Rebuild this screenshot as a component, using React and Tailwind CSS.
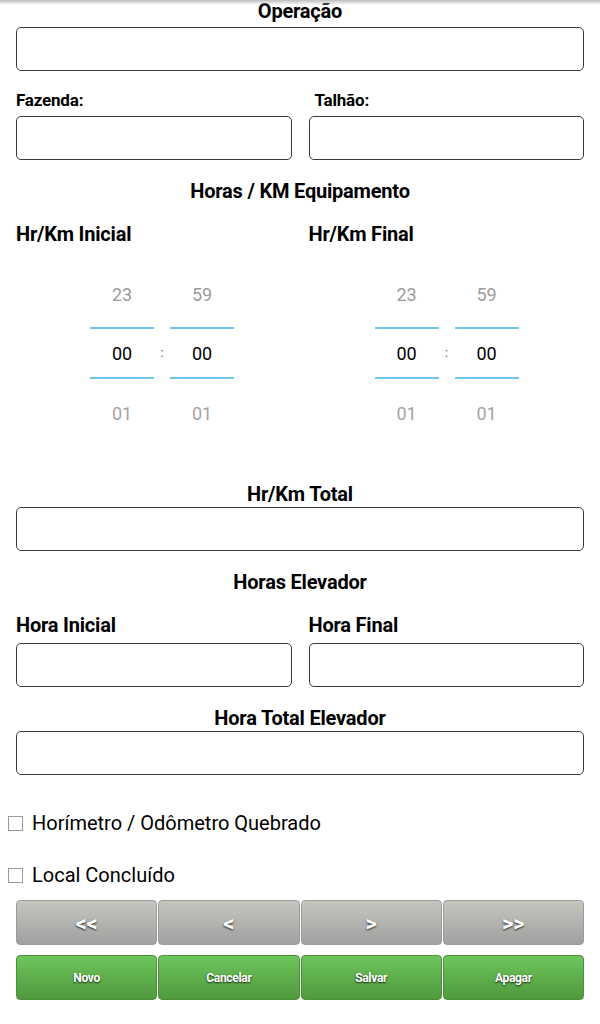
import React from "react";

const font = { fontFamily: "Roboto, 'Noto Sans', sans-serif" };

function Box({ className = "" }) {
  return <div className={`h-[44px] rounded-[5px] border border-[#3b3b35] bg-white ${className}`} />;
}

function Heading({ children, className = "" }) {
  return (
    <div className={`h-[22px] leading-[22px] text-center text-[20px] font-bold text-black tracking-[-0.2px] ${className}`}>
      {children}
    </div>
  );
}

function Column({ top, mid, bot }) {
  return (
    <div className="w-[64px] flex flex-col items-center">
      <div className="h-[62px] pb-[4px] w-full flex items-center justify-center text-[18px] text-[#9b9b9b]">{top}</div>
      <div className="h-[2px] w-full bg-[#6ec6ea]" />
      <div className="h-[48px] w-full flex items-center justify-center text-[18px] text-black">{mid}</div>
      <div className="h-[2px] w-full bg-[#6ec6ea]" />
      <div className="h-[68px] w-full flex items-center justify-center text-[18px] text-[#a3a3a3]">{bot}</div>
    </div>
  );
}

function Picker({ className = "" }) {
  return (
    <div className={`flex ${className}`}>
      <Column top="23" mid="00" bot="01" />
      <div className="w-[16px] flex flex-col">
        <div className="h-[64px]" />
        <div className="h-[48px] flex items-center justify-center text-[12px] text-[#555]">:</div>
      </div>
      <Column top="59" mid="00" bot="01" />
    </div>
  );
}

function Check({ label, className = "" }) {
  return (
    <div className={`h-[26px] flex items-center ${className}`}>
      <div className="ml-[8px] w-[15px] h-[15px] border border-[#9a9a9a] bg-white" />
      <span className="ml-[9px] text-[20px] text-black leading-[26px]">{label}</span>
    </div>
  );
}

function GrayBtn({ children }) {
  return (
    <div className="h-[45px] rounded-[4px] border border-[#9c9c9c] bg-gradient-to-b from-[#c6c6c0] to-[#a0a0a0] flex items-center justify-center text-white font-bold text-[22px] leading-none [text-shadow:0_1px_2px_rgba(0,0,0,0.8)]">
      <span className="pt-[2px]">{children}</span>
    </div>
  );
}

function GreenBtn({ children }) {
  return (
    <div className="h-[45px] rounded-[4px] border border-[#4d8f3c] bg-gradient-to-b from-[#6ec55c] to-[#4f9a3e] flex items-center justify-center text-white font-bold text-[12px] tracking-[-0.3px] [text-shadow:0_1px_2px_rgba(0,0,0,0.8)]">
      {children}
    </div>
  );
}

export default function App() {
  return (
    <div style={font} className="relative w-[600px] h-[1024px] bg-white overflow-hidden">
      <div className="h-[22px] leading-[22px] text-center text-[20px] font-bold text-black tracking-[-0.2px]">Operação</div>
      <div className="px-[16px] mt-[5px]">
        <Box />
      </div>

      <div className="grid grid-cols-2 gap-x-[17px] px-[16px] mt-[17px]">
        <div className="h-[24px] leading-[24px] text-[17px] font-bold text-black tracking-[-0.2px]">Fazenda:</div>
        <div className="h-[24px] leading-[24px] text-[17px] font-bold text-black tracking-[-0.2px] pl-[6px]">Talhão:</div>
      </div>
      <div className="grid grid-cols-2 gap-x-[17px] px-[16px] mt-[4px]">
        <Box />
        <Box />
      </div>

      <Heading className="mt-[20px]">Horas / KM Equipamento</Heading>

      <div className="grid grid-cols-2 gap-x-[17px] px-[16px] mt-[21px]">
        <div className="h-[22px] leading-[22px] text-[20px] font-bold tracking-[-0.2px]">Hr/Km Inicial</div>
        <div className="h-[22px] leading-[22px] text-[20px] font-bold tracking-[-0.2px]">Hr/Km Final</div>
      </div>

      <div className="grid grid-cols-2 gap-x-[17px] px-[16px] mt-[20px]">
        <Picker className="ml-[74px]" />
        <Picker className="ml-[66px]" />
      </div>

      <Heading className="mt-[36px]">Hr/Km Total</Heading>
      <div className="px-[16px] mt-[2px]">
        <Box />
      </div>

      <Heading className="mt-[20px]">Horas Elevador</Heading>

      <div className="grid grid-cols-2 gap-x-[17px] px-[16px] mt-[21px]">
        <div className="h-[22px] leading-[22px] text-[20px] font-bold tracking-[-0.2px]">Hora Inicial</div>
        <div className="h-[22px] leading-[22px] text-[20px] font-bold tracking-[-0.2px]">Hora Final</div>
      </div>
      <div className="grid grid-cols-2 gap-x-[17px] px-[16px] mt-[7px]">
        <Box />
        <Box />
      </div>

      <Heading className="mt-[20px]">Hora Total Elevador</Heading>
      <div className="px-[16px] mt-[2px]">
        <Box />
      </div>

      <Check label="Horímetro / Odômetro Quebrado" className="mt-[35px]" />
      <Check label="Local Concluído" className="mt-[26px]" />

      <div className="grid grid-cols-4 gap-x-[1px] pl-[16px] pr-[16px] mt-[12px]">
        <GrayBtn>&lt;&lt;</GrayBtn>
        <GrayBtn>&lt;</GrayBtn>
        <GrayBtn>&gt;</GrayBtn>
        <GrayBtn>&gt;&gt;</GrayBtn>
      </div>
      <div className="grid grid-cols-4 gap-x-[1px] pl-[16px] pr-[16px] mt-[10px]">
        <GreenBtn>Novo</GreenBtn>
        <GreenBtn>Cancelar</GreenBtn>
        <GreenBtn>Salvar</GreenBtn>
        <GreenBtn>Apagar</GreenBtn>
      </div>
      <div className="absolute top-0 left-0 right-0 h-[5px] bg-gradient-to-b from-[#bdbdbd] to-transparent" />
    </div>
  );
}
